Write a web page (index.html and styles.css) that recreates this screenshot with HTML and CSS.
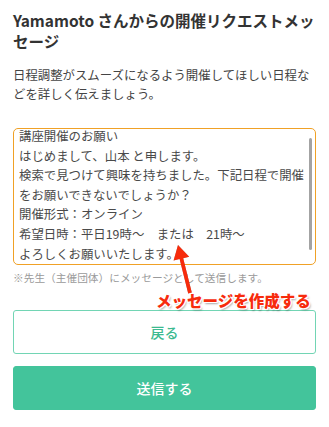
FILE: index.html
```html
<!DOCTYPE html>
<html lang="ja">
<head>
<meta charset="utf-8">
<title>開催リクエスト</title>
<link rel="stylesheet" href="styles.css">
</head>
<body>
  <main class="page">
    <h1 class="title">Yamamoto さんからの開催リクエストメッセージ</h1>
    <p class="lead">日程調整がスムーズになるよう開催してほしい日程などを詳しく伝えましょう。</p>

    <div class="textarea">
      <div class="textarea-body">
        <div class="textarea-text">講座開催のお願い<br>はじめまして、山本 と申します。<br>検索で見つけて興味を持ちました。下記日程で開催<br>をお願いできないでしょうか？<br>開催形式：オンライン<br>希望日時：平日19時～　または　21時～<br>よろしくお願いいたします。</div>
      </div>
      <div class="scrollbar"></div>
    </div>

    <p class="note">※先生（主催団体）にメッセージとして送信します。</p>

    <div class="actions">
      <button class="btn btn-outline" type="button">戻る</button>
      <button class="btn btn-primary" type="button">送信する</button>
    </div>
  </main>

  <svg class="callout-arrow" width="36" height="60" viewBox="0 0 36 60" aria-hidden="true">
    <polygon points="13,5 24.2,16.7 18.2,18.2 26.8,52.6 23.2,53.4 14.6,19 8.6,20.5" />
  </svg>
  <div class="callout-label">メッセージを作成する</div>
</body>
</html>
```

FILE: styles.css
```css
html, body {
  margin: 0;
  padding: 0;
  background: #ffffff;
}

body {
  position: relative;
  width: 329px;
  min-height: 427px;
  font-family: "Noto Sans CJK JP", "Noto Sans", sans-serif;
  color: #333333;
}

.page {
  padding: 10px 13px 0;
  display: flex;
  flex-direction: column;
}

.title {
  margin: 0;
  font-size: 15.5px;
  line-height: 21px;
  font-weight: 700;
  color: #333333;
}

.lead {
  margin: 14px 0 0;
  font-size: 12.4px;
  line-height: 18.5px;
  color: #444444;
}

.textarea {
  margin-top: 25px;
  height: 137px;
  box-sizing: border-box;
  border: 1.5px solid #f0a126;
  border-radius: 5px;
  display: flex;
}

.textarea-body {
  flex: 1;
  padding-left: 5px;
}

.textarea-text {
  margin-top: -2px;
  font-size: 12.4px;
  line-height: 19.6px;
  color: #4a4a4a;
  white-space: nowrap;
}

.scrollbar {
  align-self: flex-start;
  margin: 8.5px 3px 0 0;
  width: 3px;
  height: 112px;
  border-radius: 1.5px;
  background: #a3a3a3;
}

.note {
  margin: 4.5px 0 0;
  font-size: 10.7px;
  line-height: 16px;
  color: #9a9a9a;
}

.actions {
  margin-top: 24.5px;
  display: flex;
  flex-direction: column;
  gap: 12px;
}

.btn {
  height: 44px;
  width: 100%;
  border-radius: 3px;
  font-family: "Noto Sans CJK JP", "Noto Sans", sans-serif;
  font-size: 14px;
  font-weight: 500;
  cursor: pointer;
}

.btn-outline {
  background: #ffffff;
  border: 1.5px solid #72d5b4;
  color: #3cba90;
}

.btn-primary {
  background: #43c49b;
  border: 1px solid #43c49b;
  color: #ffffff;
}

.callout-arrow {
  position: absolute;
  left: 165px;
  top: 240px;
  fill: #f72b0c;
  filter: drop-shadow(0.5px 0.5px 0.6px rgba(0, 0, 0, 0.35));
}

.callout-label {
  position: absolute;
  left: 156px;
  top: 291px;
  font-size: 15.5px;
  line-height: 18px;
  font-weight: 900;
  color: #f72b0c;
  white-space: nowrap;
  text-shadow:
    1px 0 0 #fff, -1px 0 0 #fff, 0 1px 0 #fff, 0 -1px 0 #fff,
    1px 1px 0 #fff, -1px -1px 0 #fff, 1px -1px 0 #fff, -1px 1px 0 #fff,
    1.5px 2px 2px rgba(0, 0, 0, 0.35);
}
```
